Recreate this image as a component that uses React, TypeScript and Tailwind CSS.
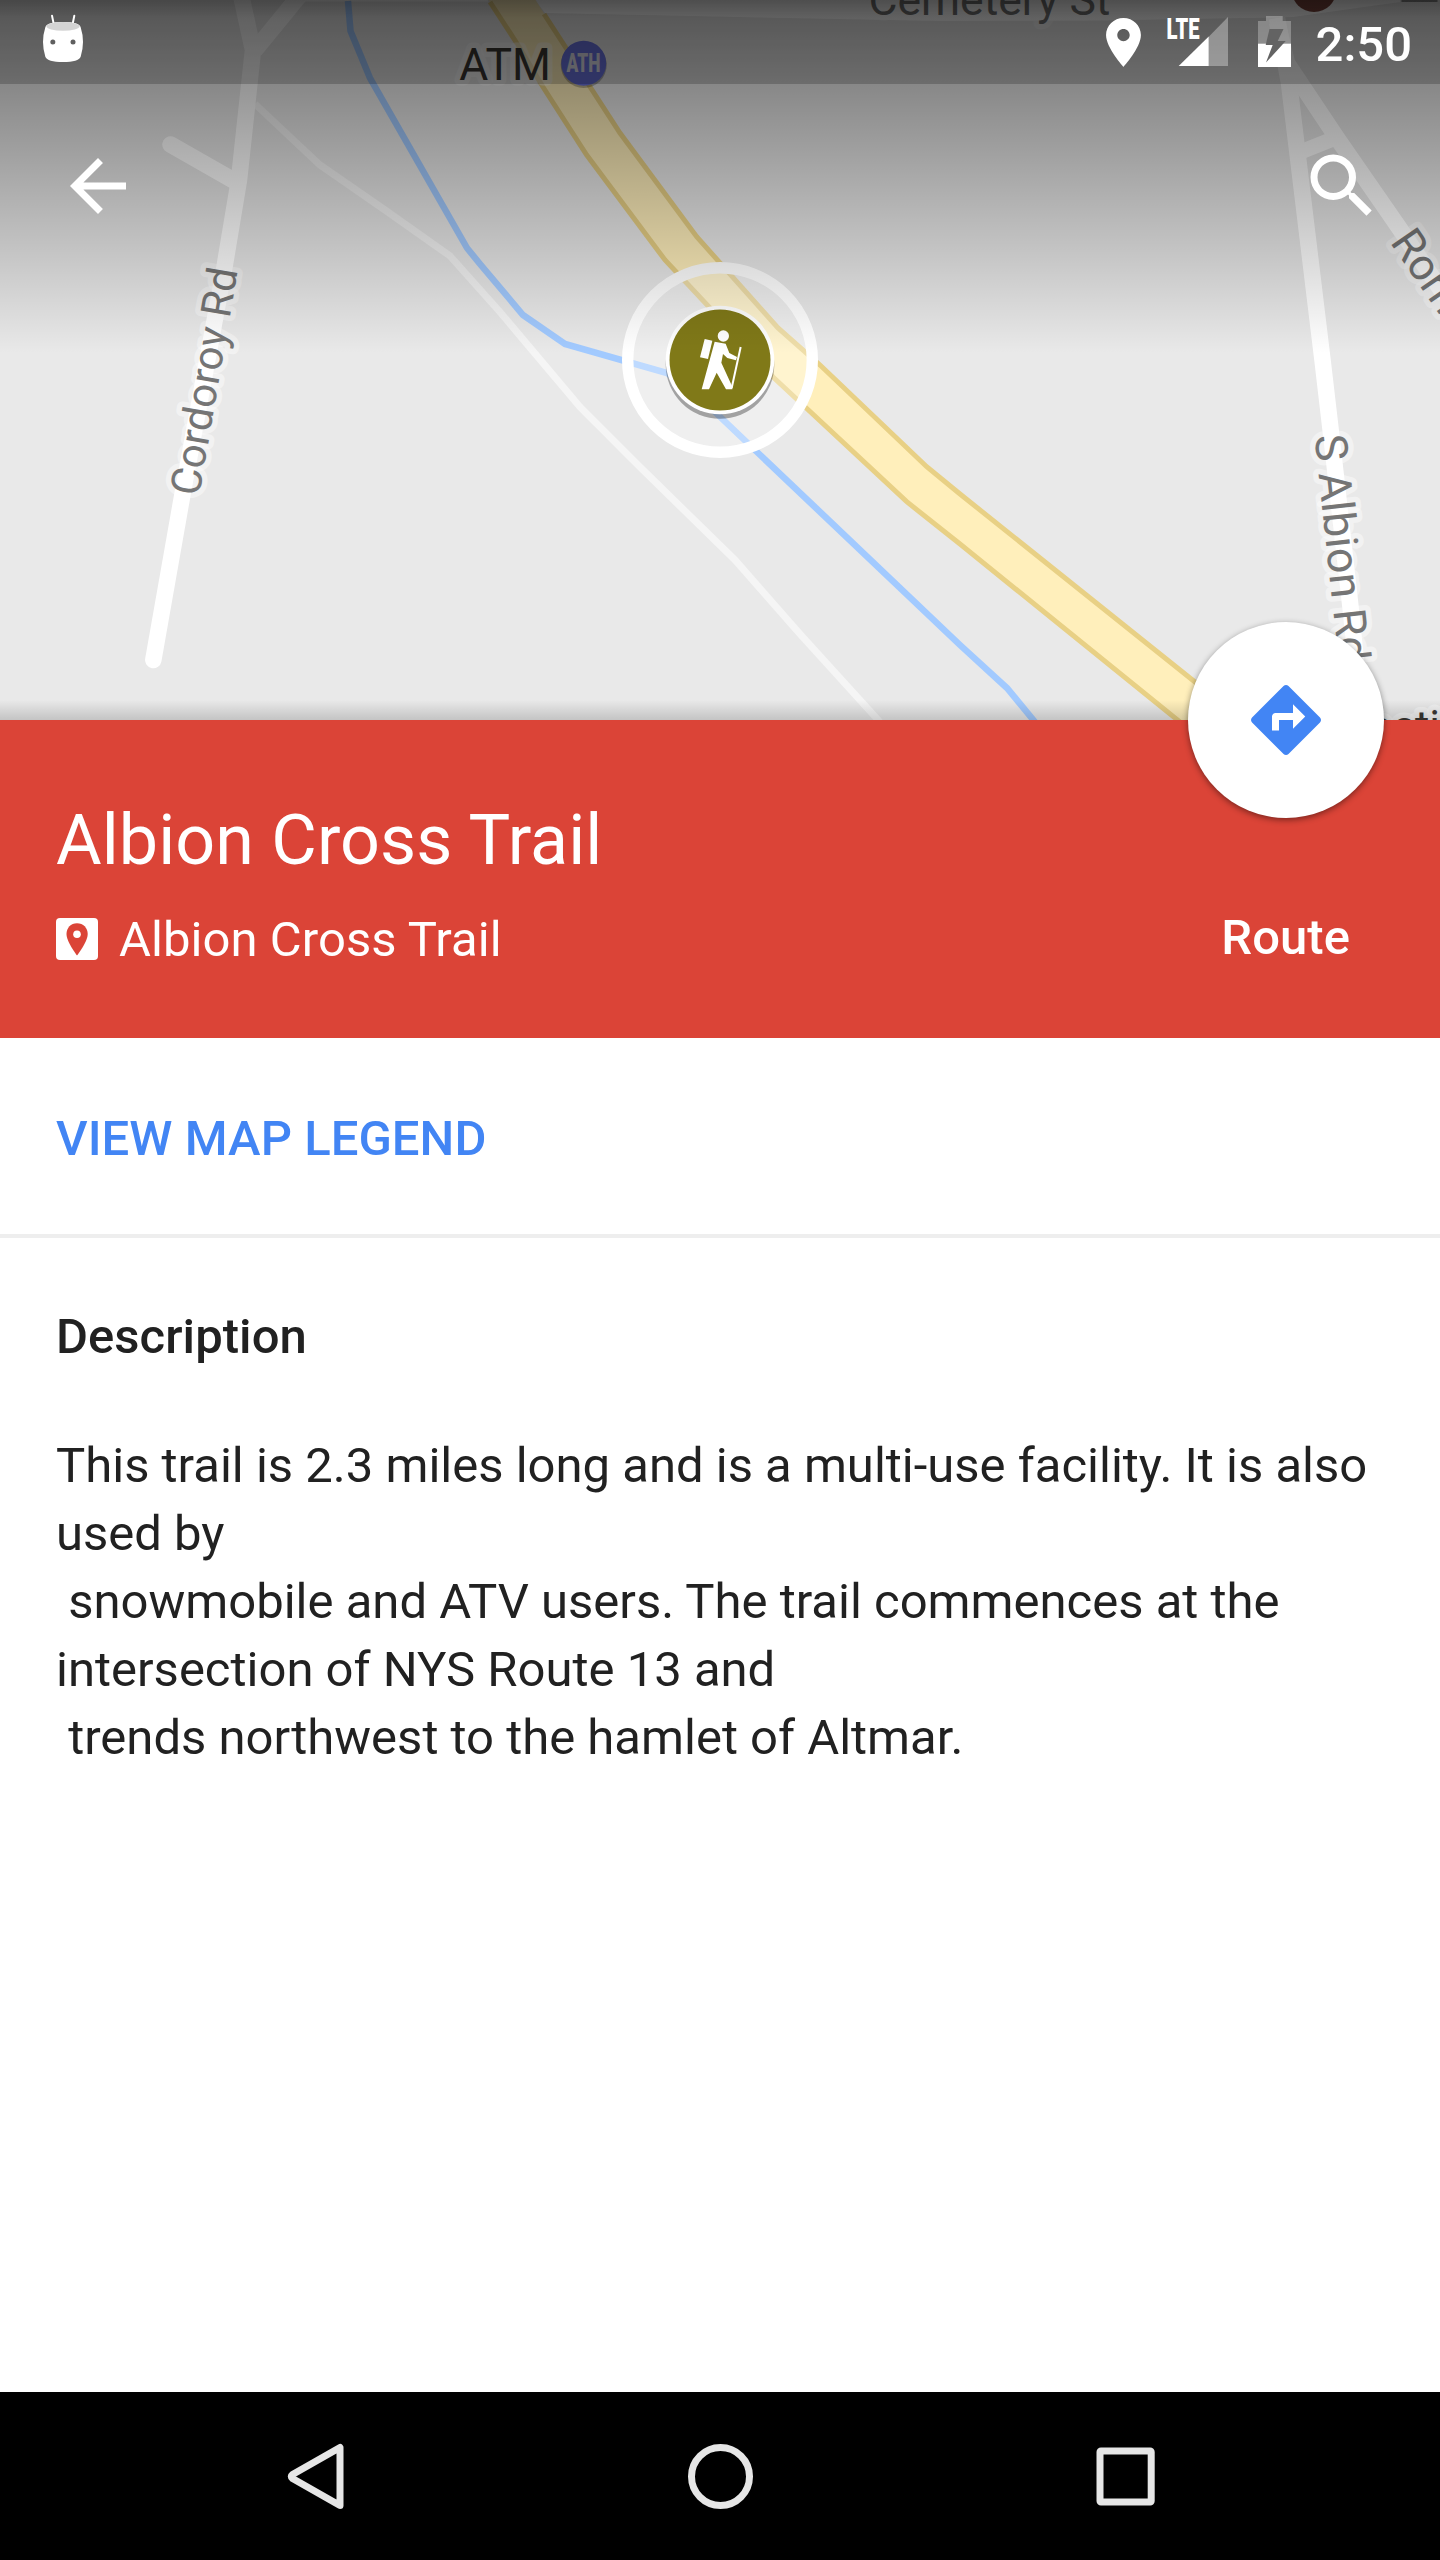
import React from "react";

const LABEL = {
  fontFamily: "Roboto, sans-serif",
  paintOrder: "stroke",
  stroke: "#ffffff",
  strokeOpacity: 0.45,
  strokeWidth: 11,
  strokeLinejoin: "round",
} as const;

function MapCanvas() {
  return (
    <svg className="block h-[720px] w-[1440px]" viewBox="0 0 1440 720">
      <rect width="1440" height="720" fill="#e9e9e9" />

      {/* footpath */}
      <path
        d="M255 104 L320 165 L385 210 L450 256 L500 312 L580 407 L640 467 L735 560 L800 634 L880 722"
        fill="none"
        stroke="#f5f5f5"
        strokeWidth="7"
      />

      {/* local roads */}
      <g fill="none" stroke="#ffffff" strokeWidth="16.5" strokeLinejoin="round">
        <path d="M241 -5 L253 50 L239 180 L224.5 267 L182.7 493 L153.3 660" strokeLinecap="round" />
        <path d="M300 -5 L255 50" />
        <path d="M170.5 144.5 L238 183" strokeLinecap="round" />
        <path d="M1277 18 L1289 83 L1322.5 360 L1331 433 L1350.5 607 L1362 720" />
        <path d="M1277 22 L1287 63 L1337 138 L1402 232 L1445 296" />
        <path d="M1298 153 L1338 137" strokeWidth="15" />
      </g>
      <path d="M300 0 H488 V1.5 H300 Z M535 0 L545 13 L940 21 L1100 20.5 L1293 17 L1400 2 L1400 0 Z" fill="#ffffff" />

      {/* creek */}
      <path
        d="M348 1 L350.5 31 L370 78 L467 248 L480 264 L523 315 L565 344 L667 373 L695 393 L960 645 L1007 688 L1035 722"
        fill="none"
        stroke="#a2caff"
        strokeWidth="6.5"
      />

      {/* highway */}
      <path
        d="M488 -1 L516.7 43 L543 87 L586.7 155 L665 260 L710 308 L773 377 L906.7 501.7 L960 544 L1178 720 L1243 720 L960 494 L926.7 466.7 L820 365 L778 328 L696.7 236.7 L620 133 L590 86.7 L545 15 L535 -1 Z"
        fill="#ffefbb"
      />
      <g fill="none" stroke="#e8d085" strokeWidth="5">
        <path d="M490 2 L516.7 43 L543 87 L586.7 155 L665 260 L710 308 L773 377 L906.7 501.7 L960 544 L1180 722" />
        <path d="M544 14 L566.7 49 L590 86.7 L620 133 L696.7 236.7 L778 328 L820 365 L926.7 466.7 L960 494 L1245 722" />
      </g>

      {/* labels */}
      <g fontSize="44" fill="#757575">
        <text x="868.5" y="15" fontSize="44.5" style={LABEL}>Cemetery St</text>
        <text transform="translate(199 497) rotate(-80.3)" fontSize="42" style={LABEL}>Cordoroy Rd</text>
        <text transform="translate(1314.5 436) rotate(83.9)" fontSize="44.8" style={LABEL}>S Albion Rd</text>
        <text transform="translate(1389.5 242) rotate(55.5)" style={LABEL}>Rome</text>
        <text x="459.3" y="80" fontSize="44.5" fill="#3a3733" style={LABEL}>ATM</text>
        <text x="1368" y="742" fill="#3a3733" style={LABEL}>action</text>
      </g>

      <circle cx="583.7" cy="65" r="23" fill="#000000" opacity="0.25" />
      <circle cx="583.7" cy="63.3" r="22.5" fill="#6972de" />
      <text x="566.5" y="72" fontSize="25" fontWeight="900" textLength="34" lengthAdjust="spacingAndGlyphs" fill="#d9d9e4" fontFamily="Roboto, sans-serif">
        ATH
      </text>
      <circle cx="1314" cy="-10.5" r="22.5" fill="#7c463e" />
      <rect x="1401.5" y="-4" width="36" height="6" fill="#8a8a8a" />

      {/* selected trail marker */}
      <circle cx="720" cy="360" r="92.5" fill="#ffffff" fillOpacity="0.3" />
      <circle cx="720" cy="360" r="92.3" fill="none" stroke="#ffffff" strokeWidth="11.4" />
      <circle cx="720" cy="364.5" r="54.3" fill="#000000" opacity="0.32" />
      <circle cx="720" cy="360" r="54.3" fill="#ffffff" />
      <circle cx="720" cy="360" r="50.5" fill="#807918" />
      <g transform="translate(640 270) scale(0.33333)" fill="#ffffff">
        <circle cx="250" cy="198" r="17" />
        <path d="M194 207 L217 212 L204 267 L180 262 Z" />
        <path d="M224 215 L257 221 L268 249 L291 261 L288 271 L262 264 L249 252 L244 278 L277 350 L277 358 L258 358 L230 308 L207 358 L185 358 Z" />
        <path d="M302 231 L275 354" stroke="#ffffff" strokeWidth="6" />
      </g>
    </svg>
  );
}

function StatusBar() {
  return (
    <div className="absolute inset-x-0 top-0 flex h-[84px] justify-between bg-black/20">
      <svg className="h-[84px] w-[84px]" viewBox="0 0 252 252">
        <path d="M156 47 L162 76 M223 47 L217 76" stroke="#fff" strokeWidth="6" strokeLinecap="round" />
        <path d="M136 82 Q140 66 189 66 Q238 66 242 82 Q256 126 242 170 Q236 186 189 186 Q142 186 136 170 Q122 126 136 82 Z" fill="#fff" />
        <ellipse cx="189" cy="79" rx="50" ry="13" fill="#d4d4d4" />
        <circle cx="158.5" cy="126" r="7.5" fill="#5f5f5f" />
        <circle cx="219" cy="126" r="7.5" fill="#5f5f5f" />
      </svg>
      <div className="flex pr-[28px]">
        <svg className="mr-[2px] h-[84px] w-[220px]" viewBox="1093 0 220 84">
          <path
            transform="translate(1092.6 13) scale(2.49 2.45)"
            d="M12 2C8.13 2 5 5.13 5 9c0 5.25 7 13 7 13s7-7.75 7-13c0-3.87-3.13-7-7-7zm0 9.5c-1.38 0-2.5-1.12-2.5-2.5s1.12-2.5 2.5-2.5 2.5 1.12 2.5 2.5-1.12 2.5-2.5 2.5z"
            fill="#fff"
          />
          <text x="1165.5" y="39" fontSize="29.5" fontWeight="900" textLength="33" lengthAdjust="spacingAndGlyphs" fill="#fff" fontFamily="Roboto, sans-serif">
            LTE
          </text>
          <path d="M1207.5 37 L1227 17 V66 H1207.5 Z" fill="#fff" opacity="0.33" />
          <path d="M1177.7 66 L1207.7 36.5 V66 Z" fill="#fff" />
          <path d="M1257 21 H1265 V16 H1281.7 V21 H1290 V44 H1257 Z" fill="#fff" opacity="0.28" />
          <rect x="1257" y="43.7" width="33" height="23.3" fill="#fff" />
          <path d="M1268.5 29 H1282.5 L1276.7 41 H1284.7 L1265 62.5 L1271.7 45 H1264.7 Z" fill="#636363" />
        </svg>
        <span className="pt-[16px] text-[49px] leading-[57px] font-medium text-white">2:50</span>
      </div>
    </div>
  );
}

function MapHeader() {
  return (
    <header className="relative h-[720px] overflow-hidden">
      <MapCanvas />
      <div className="absolute inset-x-0 top-0 h-[353px] bg-linear-to-b from-black/55 to-black/0" />
      <div className="absolute inset-x-0 top-0 h-[18px] bg-linear-to-b from-black/15 to-black/0" />
      <div className="absolute inset-x-0 bottom-0 h-[20px] bg-linear-to-b from-black/0 to-black/16" />
      <StatusBar />
      <div className="absolute inset-x-0 top-[144px] flex justify-between px-14">
        <button aria-label="Back">
          <svg className="block size-[84px]" viewBox="0 0 24 24" fill="#fff">
            <path d="M20 11H7.83l5.59-5.59L12 4l-8 8 8 8 1.41-1.41L7.83 13H20v-2z" />
          </svg>
        </button>
        <button aria-label="Search">
          <svg className="block size-[84px]" viewBox="0 0 24 24" fill="#fff">
            <path d="M15.5 14h-.79l-.28-.27A6.471 6.471 0 0 0 16 9.5 6.5 6.5 0 1 0 9.5 16c1.61 0 3.09-.59 4.23-1.57l.27.28v.79l5 4.99L20.49 19l-4.99-5zm-6 0C7.01 14 5 11.99 5 9.5S7.01 5 9.5 5 14 7.01 14 9.5 11.99 14 9.5 14z" />
          </svg>
        </button>
      </div>
    </header>
  );
}

function TitleBar() {
  return (
    <section className="relative h-[318px] bg-[#db4437] px-14 pt-[79px] text-white">
      <button
        aria-label="Directions"
        className="absolute top-[-98px] right-[56px] flex size-[196px] items-center justify-center rounded-full bg-white shadow-[0_2px_6px_rgba(0,0,0,0.45)]"
      >
        <svg className="size-[84px]" viewBox="0 0 24 24" fill="#4285f4">
          <path d="M21.71 11.29l-9-9c-.39-.39-1.02-.39-1.41 0l-9 9c-.39.39-.39 1.02 0 1.41l9 9c.39.39 1.02.39 1.41 0l9-9c.39-.38.39-1.01 0-1.41zM14 14.5V12h-4v3H8v-4c0-.55.45-1 1-1h5V7.5l3.5 3.5-3.5 3.5z" />
        </svg>
      </button>
      <h1 className="text-[70px] leading-[82px] font-normal tracking-[0.05px]">Albion Cross Trail</h1>
      <div className="mt-[30px] flex justify-between pr-[34px] text-[49px] leading-[57px] tracking-[0.05px]">
        <div className="flex">
          <svg className="mt-[7px] mr-[21px] size-[42px]" viewBox="0 0 42 42">
            <rect width="42" height="42" rx="4" fill="#fff" />
            <path d="M21 5.3 C14.8 5.3 10.5 10 10.5 16 C10.5 24 21 37.5 21 37.5 C21 37.5 31.7 24 31.7 16 C31.7 10 27.2 5.3 21 5.3 Z" fill="#db4437" />
            <circle cx="21" cy="16.3" r="3.8" fill="#fff" />
          </svg>
          <span>Albion Cross Trail</span>
        </div>
        <span className="-mt-[2px] font-medium">Route</span>
      </div>
    </section>
  );
}

function NavBar() {
  return (
    <nav className="flex h-[168px] items-center justify-center bg-black">
      <svg className="h-[168px] w-[1440px]" viewBox="0 0 1440 168" fill="none" stroke="#e6e6e6" strokeWidth="7" strokeLinejoin="round">
        <path d="M340 55.5 V113.5 L292.5 86.5 Q290 84.5 292.5 82.5 Z" />
        <circle cx="720.5" cy="84.5" r="29" />
        <rect x="1100" y="59" width="51.2" height="51" rx="1" />
      </svg>
    </nav>
  );
}

export default function App() {
  return (
    <div className="flex h-[2560px] w-[1440px] flex-col bg-white font-[Roboto,sans-serif] text-[#212121]">
      <MapHeader />
      <TitleBar />
      <div className="flex h-[200px] items-center border-b-4 border-[#eeeeee] px-14 pt-[5px]">
        <a className="text-[49px] leading-[58px] font-medium tracking-[0.05px] text-[#4285f4]">VIEW MAP LEGEND</a>
      </div>
      <main className="flex-1 px-14 pt-[70px] text-[49px]">
        <h2 className="leading-[57px] font-medium tracking-[0.05px]">Description</h2>
        <p className="mt-[67px] leading-[68px] whitespace-pre-wrap">
          {"This trail is 2.3 miles long and is a multi-use facility. It is also used by\n snowmobile and ATV users. The trail commences at the intersection of NYS Route 13 and\n trends northwest to the hamlet of Altmar."}
        </p>
      </main>
      <NavBar />
    </div>
  );
}
